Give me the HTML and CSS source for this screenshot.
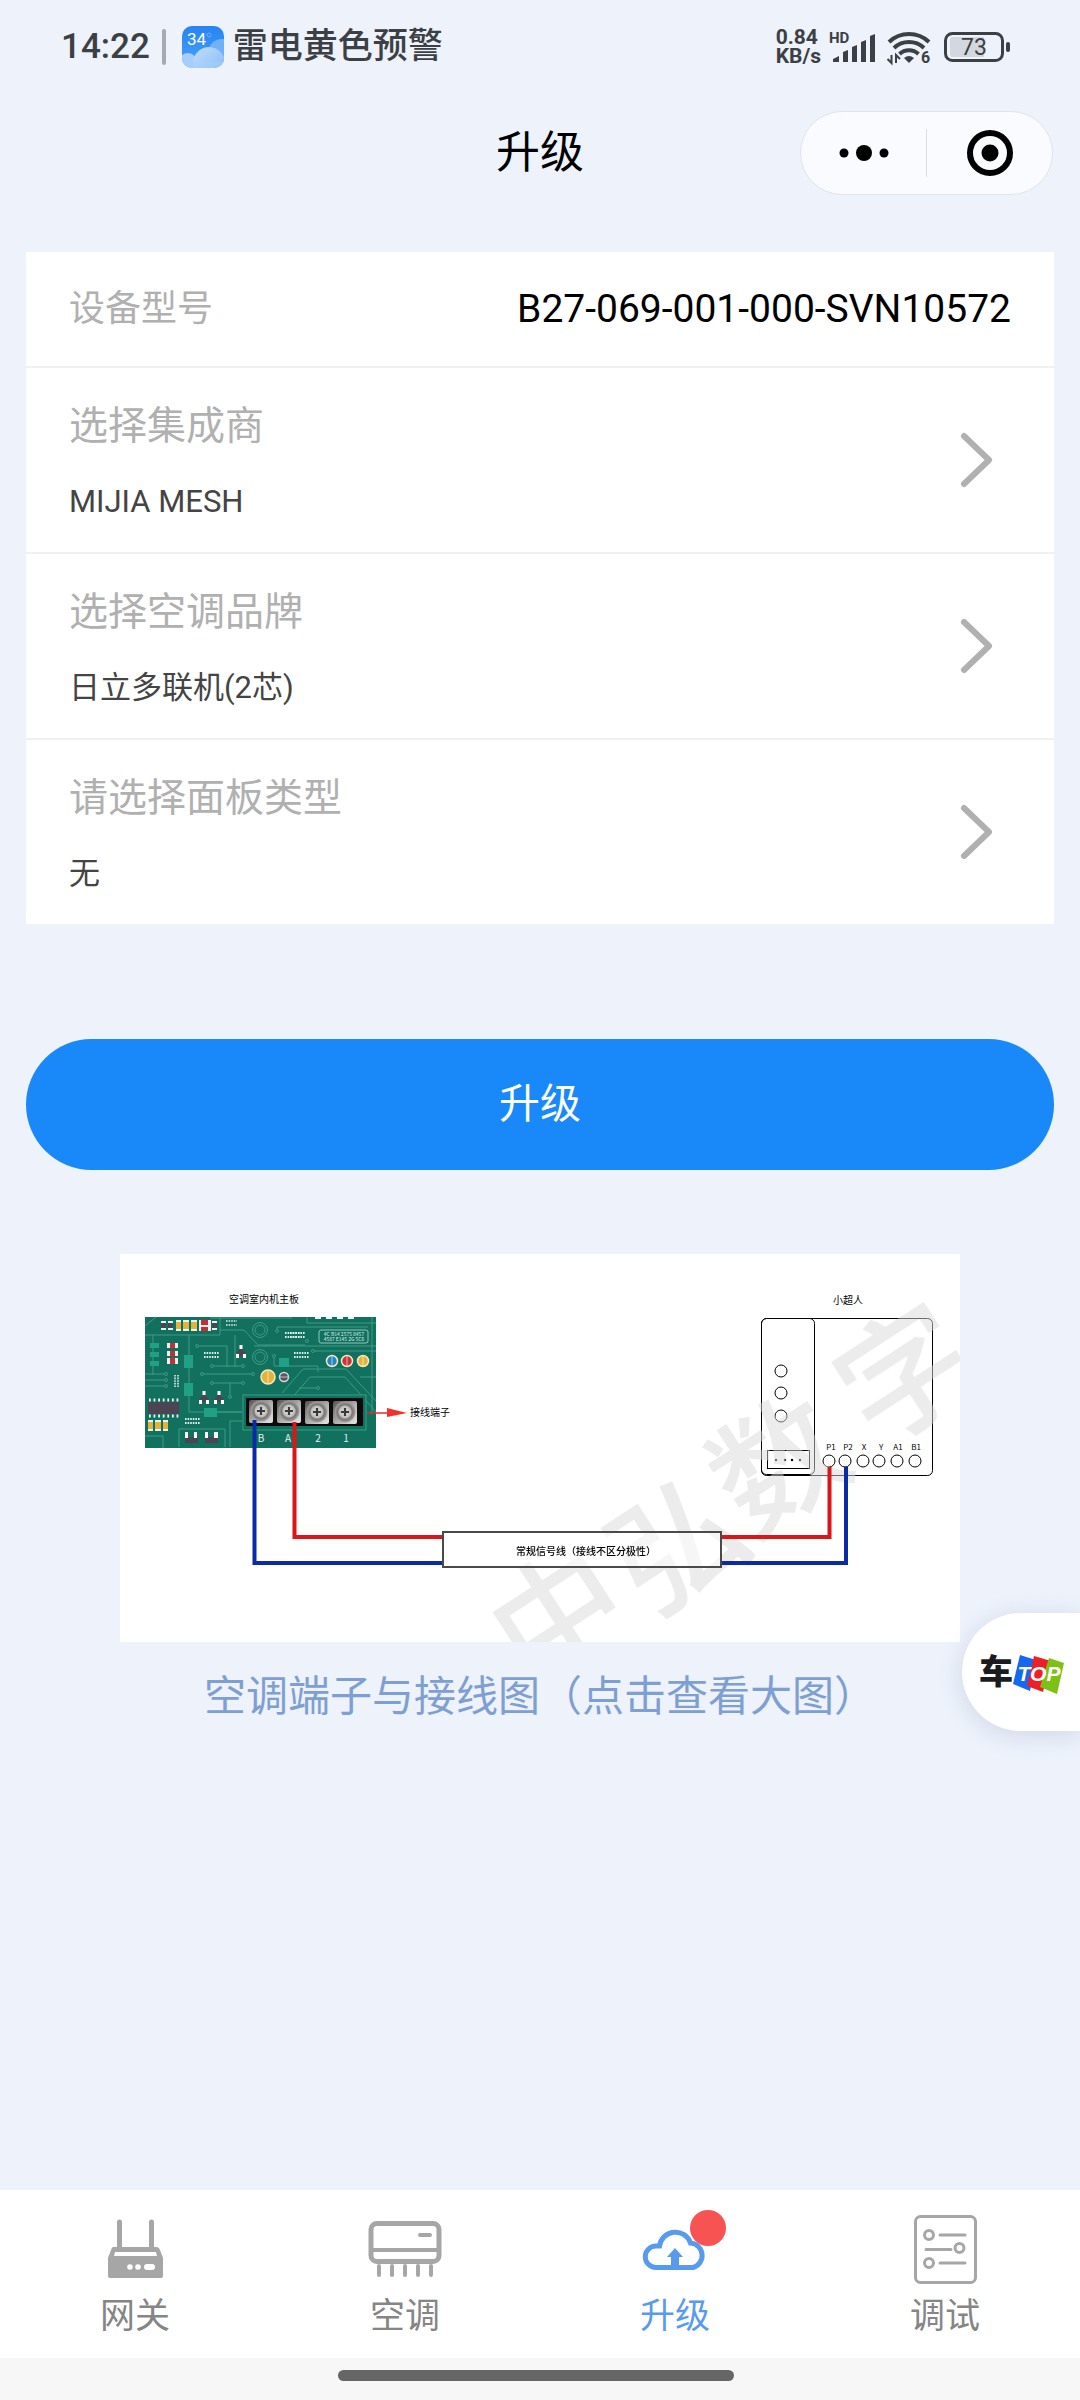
FILE: index.html
```html
<!DOCTYPE html>
<html lang="zh-CN">
<head>
<meta charset="utf-8">
<meta name="viewport" content="width=device-width, initial-scale=1">
<title>升级</title>
<link rel="stylesheet" href="styles.css">
</head>
<body>
<div class="status">
  <div class="status-side">
    <span class="clock">14:22</span>
    <span class="status-rule"></span>
    <svg class="weather" viewBox="0 0 42 42" aria-hidden="true">
      <defs>
        <linearGradient id="sky" x1="0" y1="0" x2="0" y2="1"><stop offset="0" stop-color="#2683f3"/><stop offset="1" stop-color="#4aa3f8"/></linearGradient>
        <linearGradient id="cloud" x1="0" y1="0" x2="1" y2="1"><stop offset="0" stop-color="#c3ddfb"/><stop offset="1" stop-color="#7db8f8"/></linearGradient>
        <clipPath id="tile"><rect width="42" height="42" rx="10"/></clipPath>
      </defs>
      <g clip-path="url(#tile)">
        <rect width="42" height="42" fill="url(#sky)"/>
        <circle cx="40" cy="27" r="14" fill="#6fb2f7"/>
        <circle cx="6" cy="36" r="9" fill="#a5cefa"/>
        <circle cx="27" cy="37" r="16" fill="url(#cloud)"/>
        <rect y="36" width="42" height="6" fill="#a9cefa"  opacity=".5"/>
      </g>
      <text x="5" y="19" class="weather-num">34</text>
      <circle cx="27" cy="9" r="2" fill="none" stroke="#69aef9"/>
    </svg>
    <span class="alert">雷电黄色预警</span>
  </div>
  <div class="status-side">
    <span class="speed">0.84<br>KB/s</span>
    <svg class="signal" viewBox="0 0 50 34" aria-label="HD">
      <text x="1" y="13" class="hd">HD</text>
      <g fill="#3c4044">
        <path d="M5 29l6-3v6H5zM15 22l5-2v12h-5zM24 17l5-2v17h-5zM33 12l5-2v22h-5zM42 6l5-2v28h-5z"/>
      </g>
    </svg>
    <svg class="wifi" viewBox="0 0 44 34" aria-hidden="true">
      <g fill="none" stroke="#3c4044" stroke-width="4">
        <path d="M2 12a29 29 0 0 1 40 0"/>
        <path d="M7 18a22 22 0 0 1 30 0"/>
        <path d="M12.500 24a14 14 0 0 1 19 0"/>
      </g>
      <path d="M17 28a8 8 0 0 1 10 0l-5 5z" fill="#3c4044"/>
      <path d="M4.500 25v8l-4-4M9 33v-8l4 4" fill="none" stroke="#3c4044" stroke-width="2"/>
      <text x="34" y="33" class="six">6</text>
    </svg>
    <svg class="battery" viewBox="0 0 68 30" aria-hidden="true">
      <rect x="1.500" y="1.500" width="57" height="27" rx="7" fill="none" stroke="#3c4044" stroke-width="3"/>
      <path d="M9 5h31v20H9a3 3 0 0 1-3-3V8a3 3 0 0 1 3-3z" fill="#d3d7df"/>
      <rect x="62" y="10" width="4" height="10" rx="2" fill="#3c4044"/>
      <text x="30" y="23" class="level" text-anchor="middle">73</text>
    </svg>
  </div>
</div>

<header class="titlebar">
  <h1 class="title">升级</h1>
  <div class="capsule">
    <button class="capsule-btn" type="button" aria-label="更多">
      <svg width="50" height="20" viewBox="0 0 50 20"><circle cx="5" cy="10" r="4.500"/><circle cx="25" cy="10" r="8"/><circle cx="45" cy="10" r="4.500"/></svg>
    </button>
    <button class="capsule-btn" type="button" aria-label="关闭">
      <svg width="48" height="48" viewBox="0 0 48 48"><circle cx="24" cy="24" r="20" fill="none" stroke="#000" stroke-width="6"/><circle cx="24" cy="24" r="8.500"/></svg>
    </button>
  </div>
</header>

<main class="content">
  <section class="card">
    <div class="row row-model">
      <span class="model-label">设备型号</span>
      <span class="model-value">B27-069-001-000-SVN10572</span>
    </div>
    <button class="row row-pick" type="button">
      <span class="pick"><span class="pick-label">选择集成商</span><span class="pick-value">MIJIA MESH</span></span>
      <svg class="chevron" viewBox="0 0 34 56" aria-hidden="true"><path d="M4 4l25 24L4 52"/></svg>
    </button>
    <button class="row row-pick" type="button">
      <span class="pick"><span class="pick-label">选择空调品牌</span><span class="pick-value">日立多联机(2芯)</span></span>
      <svg class="chevron" viewBox="0 0 34 56" aria-hidden="true"><path d="M4 4l25 24L4 52"/></svg>
    </button>
    <button class="row row-pick" type="button">
      <span class="pick"><span class="pick-label">请选择面板类型</span><span class="pick-value">无</span></span>
      <svg class="chevron" viewBox="0 0 34 56" aria-hidden="true"><path d="M4 4l25 24L4 52"/></svg>
    </button>
  </section>

  <button class="upgrade" type="button">升级</button>

  <figure class="wiring">
    <svg class="diagram" viewBox="0 0 840 388" role="img" aria-label="接线图">
      <defs>
        <radialGradient id="steel"><stop offset="0" stop-color="#eee"/><stop offset=".55" stop-color="#bdbcba"/><stop offset=".7" stop-color="#777472"/><stop offset="1" stop-color="#a5a2a0"/></radialGradient>
        <linearGradient id="plate" x1="0" y1="0" x2="1" y2="1"><stop offset="0" stop-color="#55514f"/><stop offset=".5" stop-color="#aaa"/><stop offset="1" stop-color="#e8e8e8"/></linearGradient>
        <g id="screw">
          <rect x="-12" y="-11" width="24" height="23" rx="2" fill="url(#plate)"/>
          <circle r="10.500" fill="url(#steel)"/>
          <path d="M-4 0h8M0-4v8" stroke="#3a3a3a" stroke-width="2.200"/>
        </g>
        <g id="fet">
          <path d="M-5 5l1-4 2-1v-2h4v2l2 1 1 4z" fill="#4b4453"/>
          <path d="M-1.500-6h3v4h-3zM-5 3h3v4h-3zM2 3h3v4h-3z" fill="#fff"/>
        </g>
        <g id="dots"><path d="M0 0h15M0 4h15" stroke="#d9efe8" stroke-width="2" stroke-dasharray="1.600 1"/></g>
      </defs>

      <rect width="840" height="388" fill="#fff"/>

      <!-- indoor unit main board -->
      <text x="144" y="49" class="cap" text-anchor="middle">空调室内机主板</text>
      <rect x="25" y="63" width="231" height="131" fill="#12705f"/>
      <g fill="none" stroke="#3f9a83" stroke-width="1">
        <path d="M25 72l11-9M25 81h75v-18M69 81v77h53M115 81v32M33 81v40M100 76h24l14 15h47M90 64h82M187 63v6h69M157 77v-4h91M134 92h122M193 97h63M77 92h30v21M92 112h31M82 120h51M92 129h31M110 129v14M25 120h21M25 126h21M25 132h21M162 139l21-24h43l30 32M171 145l19-22h35l31 35M179 134h19M154 102v10h44v6M91 158h31M110 193v-26h12M59 193v-18h46v18M25 182h18v12M252 63v97M240 123h16"/>
        <circle cx="140" cy="76" r="7.500"/><circle cx="140" cy="76" r="5"/>
        <circle cx="140" cy="103" r="7.500"/><circle cx="140" cy="103" r="5"/>
        <g fill="#12705f">
          <circle cx="77" cy="92" r="1.500"/><circle cx="92" cy="112" r="1.500"/><circle cx="123" cy="112" r="1.500"/><circle cx="82" cy="120" r="1.500"/><circle cx="133" cy="120" r="1.500"/><circle cx="92" cy="129" r="1.500"/><circle cx="123" cy="129" r="1.500"/><circle cx="110" cy="143" r="1.500"/><circle cx="46" cy="120" r="1.500"/><circle cx="46" cy="126" r="1.500"/><circle cx="46" cy="132" r="1.500"/><circle cx="157" cy="77" r="1.500"/><circle cx="187" cy="87" r="1.500"/><circle cx="193" cy="97" r="1.500"/><circle cx="154" cy="102" r="1.500"/><circle cx="198" cy="134" r="1.500"/>
        </g>
      </g>
      <g fill="#20a184"><path d="M64 101h9v13h-9zM64 129h9v13h-9zM84 154h13v9H84zM159 104h10v9h-10zM30 89h9v5h-9zM30 98h9v5h-9zM30 107h9v5h-9z"/></g>
      <g fill="#e8f2ee"><path d="M41 67h5v9h-5zM48 67h5v9h-5zM92 67h5v9h-5zM79 66h12v11H79zM56 66h5v11h-5zM63 66h6v11h-6zM71 66h6v11h-6zM47 89h11v5H47zM47 97h11v5H47zM47 104h11v6H47zM28 166h5v11h-5zM35 166h6v11h-6zM43 166h5v11h-5zM195 63h6v2h-6zM206 63h6v2h-6zM217 63h6v2h-6zM228 63h6v2h-6z"/></g>
      <g fill="#4b4453"><path d="M41 69h5v5h-5zM48 69h5v5h-5zM92 69h5v5h-5zM28 148h31v12H28zM65 183h13v6H65zM85 183h13v6H85z"/></g>
      <g fill="#e2b33d"><path d="M56 68h5v7h-5zM63 68h6v7h-6zM71 68h6v7h-6zM28 168h5v7h-5zM35 168h6v7h-6zM43 168h5v7h-5z"/></g>
      <g fill="#c42f35"><path d="M81 66h7v5h-7zM81 73h7v4h-7zM50 89h5v5h-5zM50 97h5v5h-5zM50 104h5v6h-5z"/></g>
      <path d="M29 146h30M29 162h30" stroke="#fff" stroke-width="3" stroke-dasharray="1.700 2.900"/>
      <path d="M65 178h3v6h-3zM74 178h3v6h-3zM85 178h3v6h-3zM94 178h4v6h-4z" fill="#fff"/>
      <use href="#fet" x="121" y="97"/><use href="#fet" x="84" y="143"/><use href="#fet" x="99" y="143"/>
      <use href="#dots" x="84" y="99"/><use href="#dots" x="65" y="165"/><use href="#dots" x="165" y="79"/><use href="#dots" x="170" y="79"/><use href="#dots" x="174" y="99"/>
      <path d="M106 67h11M106 71h11M55 121v12M58 121v12" stroke="#d9efe8" stroke-width="1.600" stroke-dasharray="1.600 1"/>
      <g stroke="#f6e9bf" stroke-width="1.500">
        <circle cx="148" cy="123" r="7" fill="#e2b33d"/><circle cx="164" cy="123" r="4.500" fill="#5b5661" stroke="#cfd8d6"/>
        <circle cx="212" cy="107" r="5.500" fill="#2185c8"/><circle cx="227" cy="107" r="5.500" fill="#c9343a"/><circle cx="243" cy="107" r="5.500" fill="#e2b33d"/>
      </g>
      <path d="M148 117v12M212 102v10M227 102v10M243 102v10M160 123h8" stroke="#fff" stroke-opacity=".6"/>
      <rect x="199" y="76" width="49" height="13" rx="2" fill="none" stroke="#8fc7b8"/>
      <text x="224" y="82" class="silk" text-anchor="middle">4C B14 2575 8457</text>
      <text x="224" y="87" class="silk" text-anchor="middle">4587 E145 2G 5C6</text>
      <rect x="123" y="141" width="123" height="35" fill="#12705f" stroke="#31a286"/>
      <rect x="126" y="144" width="117" height="28" fill="#0c0a0b"/>
      <use href="#screw" x="141" y="157"/><use href="#screw" x="169" y="157"/><use href="#screw" x="197" y="158"/><use href="#screw" x="225" y="158"/>
      <g class="pin" text-anchor="middle"><text x="141" y="188">B</text><text x="168" y="188">A</text><text x="198" y="188">2</text><text x="226" y="188">1</text></g>
      <path d="M247 159h24" stroke="#e32a2a" stroke-width="1.500"/>
      <path d="M267 154l20 5-20 4z" fill="#f3302c"/>
      <text x="290" y="162" class="cap">接线端子</text>

      <!-- adapter -->
      <g fill="none" stroke="#000" stroke-width="1">
        <rect x="641.500" y="64.500" width="171" height="157" rx="5"/>
        <rect x="641.500" y="64.500" width="53" height="156" rx="5"/>
        <circle cx="661" cy="117" r="6"/><circle cx="661" cy="139" r="6"/><circle cx="661" cy="162" r="6"/>
        <rect x="647.500" y="196.500" width="42" height="18"/>
        <circle cx="709" cy="207" r="6"/><circle cx="725" cy="207" r="6"/><circle cx="743" cy="207" r="6"/><circle cx="759" cy="207" r="6"/><circle cx="777" cy="207" r="6"/><circle cx="795" cy="207" r="6"/>
      </g>
      <circle cx="656" cy="206" r="1.200"/><circle cx="665" cy="206" r="1.200"/><circle cx="672" cy="206" r="1.200"/><circle cx="680" cy="206" r="1.200"/>
      <text x="728" y="50" class="cap" text-anchor="middle">小超人</text>
      <g class="port" text-anchor="middle"><text x="711" y="196">P1</text><text x="728" y="196">P2</text><text x="744" y="196">X</text><text x="761" y="196">Y</text><text x="778" y="196">A1</text><text x="796" y="196">B1</text></g>

      <!-- watermark -->
      <g class="mark" text-anchor="middle">
        <text transform="translate(438 362) rotate(-33)" y="48">中</text>
        <text transform="translate(557 290) rotate(-33)" y="48">弘</text>
        <text transform="translate(658 210) rotate(-33)" y="48">数</text>
        <text transform="translate(784 119) rotate(-33)" y="48">字</text>
      </g>

      <!-- wires -->
      <g fill="none" stroke-width="4">
        <path d="M134.500 166v143H324M600 309h126V213" stroke="#0a2aa6"/>
        <path d="M174.500 168v115H324M600 283h109.500V213" stroke="#dc1518"/>
      </g>
      <rect x="323" y="278" width="278" height="35" fill="#fff" fill-opacity=".5" stroke="#4a4a4a" stroke-width="2"/>
      <text x="396" y="301" class="cap cap-line">常规信号线（接线不区分极性）</text>
    </svg>
    <figcaption><a class="wiring-link" href="#">空调端子与接线图（点击查看大图）</a></figcaption>
  </figure>
</main>

<button class="float" type="button" aria-label="车TOP">
  <svg width="88" height="44" viewBox="0 0 88 44">
    <text x="1" y="34" class="che">车</text>
    <path d="M42 5l16 5-6 31-17-7z" fill="#1768f0"/>
    <path d="M56 6l17 5-8 31-16-6z" fill="#ec2027"/>
    <path d="M71 8l15 5-7 31-17-7z" fill="#7dc116"/>
    <text x="61" y="31" class="top" text-anchor="middle">TOP</text>
  </svg>
</button>

<nav class="tabs">
  <a class="tab" href="#">
    <svg class="tab-icon" viewBox="0 0 80 80" aria-hidden="true">
      <path d="M24.500 12v26M56.500 12v26" stroke="#a6a6a6" stroke-width="5" stroke-linecap="round"/>
      <path fill="#a6a6a6" fill-rule="evenodd" d="M18 37h43q3 0 4 3l3 8v18q0 2-2 2H15q-2 0-2-2V48l3-8q1-3 2-3zM20 42l-1 4h43l-1-4z"/>
      <g fill="#fff"><circle cx="35" cy="57" r="2.800"/><circle cx="43" cy="57" r="2.800"/><rect x="49" y="54" width="11" height="6" rx="3"/></g>
    </svg>
    网关
  </a>
  <a class="tab" href="#">
    <svg class="tab-icon" viewBox="0 0 80 80" aria-hidden="true">
      <g fill="none" stroke="#a6a6a6" stroke-linecap="round">
        <rect x="6" y="13.500" width="68" height="38" rx="6" stroke-width="5"/>
        <path d="M6 40h68M55 25h10M14 56v9M27 56v9M40 56v9M53 56v9M66 56v9" stroke-width="4"/>
      </g>
    </svg>
    空调
  </a>
  <a class="tab tab-on" href="#" aria-current="page">
    <svg class="tab-icon" viewBox="0 0 80 80" aria-hidden="true">
      <path d="M21 57.500a10.700 10.700 0 0 1 0-21.500h3.500a16 16 0 0 1 31-3a12.500 12.500 0 0 1 2.500 24.500z" fill="none" stroke="#589bed" stroke-width="5"/>
      <path d="M40 38l8 9h-4v11h-8V47h-4z" fill="#589bed"/>
    </svg>
    <span class="badge"></span>
    升级
  </a>
  <a class="tab" href="#">
    <svg class="tab-icon" viewBox="0 0 80 80" aria-hidden="true">
      <g fill="none" stroke="#a6a6a6" stroke-width="3" stroke-linecap="round">
        <rect x="10.500" y="6.500" width="60" height="66" rx="5"/>
        <circle cx="24" cy="25" r="4.500"/><circle cx="54.500" cy="38" r="4.500"/><circle cx="24" cy="53" r="4.500"/>
        <path d="M35 25h25M21 39.500h25M35 53h25"/>
      </g>
    </svg>
    调试
  </a>
</nav>
<div class="home"><span class="home-bar"></span></div>
</body>
</html>
```
FILE: styles.css
```css
* { box-sizing: border-box; }

body {
  margin: 0;
  min-height: 100vh;
  display: flex;
  flex-direction: column;
  background: #edf2fb;
  font-family: Roboto, "Noto Sans CJK SC", sans-serif;
  color: #000;
}

button {
  border: 0;
  padding: 0;
  background: none;
  font: inherit;
  color: inherit;
  text-align: left;
}

a { color: inherit; text-decoration: none; }
svg { display: block; overflow: visible; }

/* status bar */
.status {
  height: 92px;
  padding: 2px 68px 0 61px;
  display: flex;
  justify-content: space-between;
  align-items: center;
  color: #3c4044;
}
.status-side { display: flex; align-items: center; }
.clock { font-size: 35px; line-height: 40px; font-weight: 500; }
.status-rule { width: 4px; height: 36px; margin: 0 16px 0 12px; border-radius: 2px; background: #a5aab2; }
.weather { width: 42px; height: 42px; margin-right: 9px; }
.weather-num { font-size: 17px; fill: #fff; }
.alert { font-size: 35px; line-height: 40px; font-weight: 500; }
.speed { font-size: 21px; line-height: 19px; font-weight: 700; margin-right: 7px; }
.signal { width: 50px; height: 34px; margin-right: 9px; }
.hd { font-size: 15px; font-weight: 700; fill: #3c4044; }
.wifi { width: 44px; height: 34px; margin-right: 13px; }
.six { font-size: 16px; font-weight: 700; fill: #3c4044; }
.battery { width: 68px; height: 30px; }
.level { font-size: 23px; fill: #3c4044; }

/* title bar */
.titlebar {
  height: 122px;
  padding: 0 27px;
  display: grid;
  grid-template-columns: 253px 1fr 253px;
  align-items: center;
}
.title { grid-column: 2; margin: 0; font-size: 44px; line-height: 64px; font-weight: 400; text-align: center; }
.capsule {
  height: 84px;
  display: flex;
  align-items: center;
  border: 1px solid #dfe4ed;
  border-radius: 42px;
  background: #f9fbff;
}
.capsule-btn { flex: 1; height: 48px; display: flex; justify-content: center; align-items: center; }
.capsule-btn + .capsule-btn { border-left: 1px solid #d9dde3; }

/* settings card */
.content { flex: 1; padding: 38px 26px 0; }
.card { background: #fff; }
.row {
  width: 100%;
  padding: 0 43px;
  display: flex;
  justify-content: space-between;
  align-items: center;
}
.row + .row { border-top: 2px solid #f0f0f0; }
.row-model { height: 114px; }
.model-label { font-size: 36px; line-height: 52px; color: #b0b0b0; }
.model-value { font-size: 39px; line-height: 52px; }
.row-pick { height: 186px; padding-right: 60px; }
.pick { display: flex; flex-direction: column; gap: 28px; padding-top: 4px; }
.pick-label { font-size: 39px; line-height: 52px; color: #b0b0b0; }
.pick-value { font-size: 31px; line-height: 44px; color: #444; }
.chevron { width: 34px; height: 56px; fill: none; stroke: #b0b0b0; stroke-width: 6; stroke-linecap: round; stroke-linejoin: round; }

.upgrade {
  width: 100%;
  height: 131px;
  padding-bottom: 2px;
  margin-top: 115px;
  border-radius: 66px;
  background: #1989fa;
  color: #fff;
  font-size: 41px;
  line-height: 52px;
  text-align: center;
}

/* wiring diagram */
.wiring { margin: 84px 94px 0; text-align: center; }
.diagram { width: 100%; height: auto; overflow: hidden; }
.diagram text { font-family: "Noto Sans CJK SC", sans-serif; }
.cap { font-size: 10px; }
.cap-line { font-size: 10px; font-weight: 500; }
.silk { font-size: 5px; fill: #d9efe8; }
.pin { font-size: 10px; fill: #e3efec; }
.port { font-size: 8px; }
.mark { font-size: 130px; font-weight: 500; fill: #d8d8d8; opacity: .5; }
.wiring-link { display: block; margin-top: 23px; font-size: 42px; line-height: 64px; color: #7e9fd2; white-space: nowrap; }

/* floating shortcut */
.float {
  position: absolute;
  top: 1613px;
  right: 0;
  width: 118px;
  height: 118px;
  padding-left: 16px;
  display: flex;
  align-items: center;
  border-radius: 59px 0 0 59px;
  background: #fff;
  box-shadow: 0 4px 24px rgba(90, 110, 150, .2);
}
.che { font-family: "Noto Sans CJK SC", sans-serif; font-size: 34px; font-weight: 900; fill: #1b1b1f; }
.top { font-family: "Liberation Sans", sans-serif; font-size: 21px; font-weight: 700; font-style: italic; fill: #fff; }

/* tab bar */
.tabs { display: grid; grid-template-columns: repeat(4, 1fr); height: 168px; background: #fff; }
.tab {
  position: relative;
  padding-top: 20px;
  display: flex;
  flex-direction: column;
  align-items: center;
  font-size: 35px;
  line-height: 54px;
  color: #858585;
}
.tab-on { color: #589bed; }
.tab-icon { width: 80px; height: 80px; }
.badge {
  position: absolute;
  top: 20px;
  left: calc(50% + 15px);
  width: 36px;
  height: 36px;
  border-radius: 50%;
  background: #f75353;
}
.home { height: 42px; padding: 12px 8px 0 0; background: #f7f7f7; }
.home-bar { display: block; width: 37%; height: 11px; margin: 0 auto; border-radius: 6px; background: #666; }
```
